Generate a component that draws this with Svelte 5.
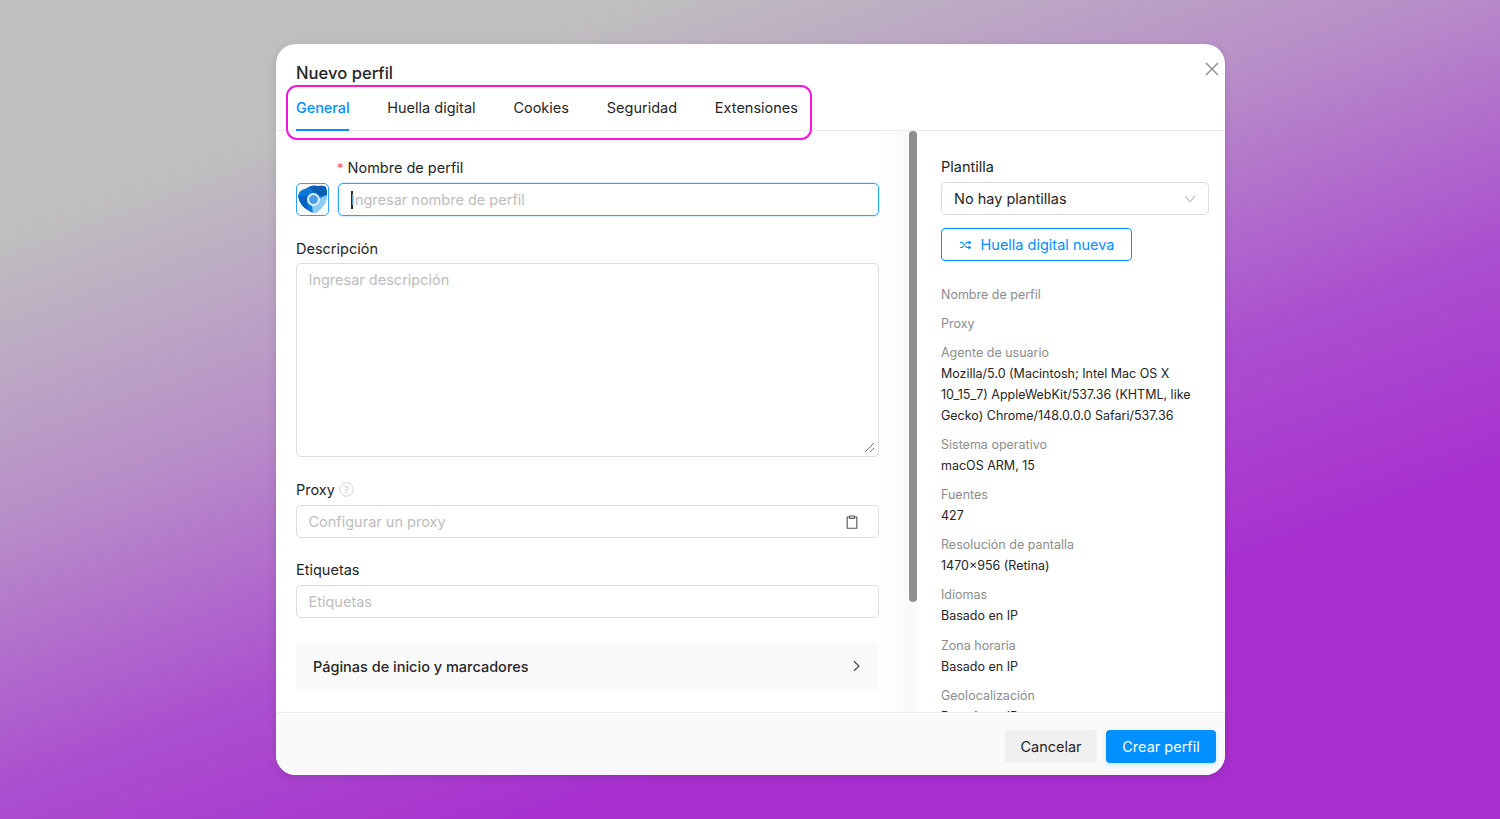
<script>
  const info = [
    { k: 'Nombre de perfil' },
    { k: 'Proxy' },
    { k: 'Agente de usuario', v: 'Mozilla/5.0 (Macintosh; Intel Mac OS X 10_15_7) AppleWebKit/537.36 (KHTML, like Gecko) Chrome/148.0.0.0 Safari/537.36' },
    { k: 'Sistema operativo', v: 'macOS ARM, 15' },
    { k: 'Fuentes', v: '427' },
    { k: 'Resolución de pantalla', v: '1470×956 (Retina)' },
    { k: 'Idiomas', v: 'Basado en IP' },
    { k: 'Zona horaria', v: 'Basado en IP' },
    { k: 'Geolocalización', v: 'Basado en IP' }
  ];
  const tabs = ['General', 'Huella digital', 'Cookies', 'Seguridad', 'Extensiones'];
</script>

<div class="page">
  <div class="modal">
    <header class="head">
      <h1>Nuevo perfil</h1>
      <button class="close" aria-label="Cerrar">
        <svg width="14" height="14" viewBox="0 0 14 14"><path d="M1 1l12 12M13 1L1 13" stroke="#8c8c8c" stroke-width="1.4" fill="none"/></svg>
      </button>
      <nav class="tabs">
        {#each tabs as t, i}
          <span class="tab" class:active={i === 0}>{t}</span>
        {/each}
      </nav>
      <div class="mark"></div>
    </header>

    <div class="body">
      <section class="left">
        <div class="namerow">
          <div class="avatar">
            <svg width="31" height="31" viewBox="0 0 31 31">
              <path d="M1 12 Q2 6 8 5 Q15 0 21 2 Q26 1 29 3 Q31 9 29.5 15 Q27 23 20 28 Q16 30 12 27 Q3 22 1 12Z" fill="#0b78d8"/>
              <path d="M12 3 Q16 1 21 2 Q26 1 29 3 Q30 7 29.8 11 L23 12 L17 8 Z" fill="#0a5db8"/>
              <path d="M21 15 L29.8 11 Q30 14 29 17 Q26 24 20 28 Q18 29 16 29 L15 22 Z" fill="#8ccdf7"/>
              <path d="M1 12 L10 12 L10 20 L11 26 Q3 22 1 12Z" fill="#0760bd"/>
              <circle cx="16.5" cy="15.5" r="5.5" fill="#4f9fe4" stroke="#dff1ff" stroke-width="2"/>
            </svg>
          </div>
          <div class="namecol">
            <label class="lbl namelbl" for="n"><span class="req">*</span>Nombre de perfil</label>
            <div class="input focus" id="n"><span class="caret"></span><span class="ph">Ingresar nombre de perfil</span></div>
          </div>
        </div>

        <div class="lbl desc-lbl">Descripción</div>
        <div class="textarea">
          <span class="ph">Ingresar descripción</span>
          <svg class="grip" width="11" height="11" viewBox="0 0 11 11"><path d="M1 10L10 1M6 10l4-4" stroke="#777" stroke-width="1" fill="none"/></svg>
        </div>

        <div class="lbl proxy-lbl">Proxy
          <svg width="15" height="15" viewBox="0 0 15 15"><circle cx="7.5" cy="7.5" r="6.8" fill="none" stroke="#d4d4d4"/><text x="7.5" y="10.8" text-anchor="middle" font-size="9" fill="#c4c4c4">?</text></svg>
        </div>
        <div class="input">
          <span class="ph">Configurar un proxy</span>
          <svg class="clip" width="12" height="14" viewBox="0 0 12 14"><path d="M3.5 2H1.2v11.3h9.6V2H8.5" fill="none" stroke="#555" stroke-width="1.1"/><rect x="3.5" y="1" width="5" height="2.4" rx=".5" fill="none" stroke="#555" stroke-width="1.1"/></svg>
        </div>

        <div class="lbl tags-lbl">Etiquetas</div>
        <div class="input"><span class="ph">Etiquetas</span></div>

        <div class="collapse">
          <span>Páginas de inicio y marcadores</span>
          <svg width="9" height="12" viewBox="0 0 9 12"><path d="M2 1.2L7 6l-5 4.8" fill="none" stroke="#444" stroke-width="1.2"/></svg>
        </div>
      </section>

      <div class="scroll"><div class="thumb"></div></div>

      <aside class="right">
        <div class="lbl plant">Plantilla</div>
        <div class="select">
          <span>No hay plantillas</span>
          <svg width="12" height="8" viewBox="0 0 12 8"><path d="M1 1.2l5 5.4 5-5.4" fill="none" stroke="#bdbdbd" stroke-width="1.1"/></svg>
        </div>
        <button class="outline">
          <svg width="13" height="10" viewBox="0 0 13 10"><path d="M1 2.5h2.2l4.6 5H11M1 7.5h2.2l1.4-1.6M6.5 3.9l1.3-1.4H11M9.6 1l1.9 1.5-1.9 1.5M9.6 6l1.9 1.5L9.6 9" fill="none" stroke="#0090ff" stroke-width="1.1"/></svg>
          Huella digital nueva
        </button>
        <div class="info">
          {#each info as it}
            <div class="item">
              <div class="k">{it.k}</div>
              {#if it.v}<div class="v">{it.v}</div>{/if}
            </div>
          {/each}
        </div>
      </aside>
    </div>

    <footer class="foot">
      <button class="btn ghost">Cancelar</button>
      <button class="btn primary">Crear perfil</button>
    </footer>
  </div>
</div>

<style>
  :global(body) { margin: 0; }
  .page {
    box-sizing: border-box;
    width: 1500px; height: 819px;
    padding: 44px 275px 44px 276px;
    overflow: hidden;
    background: linear-gradient(160deg, #bfbfbf 0%, #bfbfbf 17%, #b88fc8 38%, #ab4fcf 58%, #a82fcf 75%, #a82ecf 100%);
    font-family: Inter, "Liberation Sans", sans-serif;
    color: #262626;
  }
  .modal {
    height: 731px;
    background: #fff;
    border-radius: 20px;
    display: flex; flex-direction: column;
    overflow: hidden;
    box-shadow: 0 2px 8px rgba(0,0,0,.12);
  }
  .head {
    position: relative;
    height: 87px;
    flex: none;
    box-sizing: border-box;
    padding: 18.5px 20px 0;
    border-bottom: 1px solid #ececec;
  }
  h1 { margin: 0; font-size: 16.6px; line-height: 21px; font-weight: 500; }
  .close { position: absolute; top: 18px; right: 6px; background: none; border: 0; padding: 0; width: 14px; height: 14px; display: flex; }
  .tabs { display: flex; gap: 37.8px; margin-top: 4.5px; }
  .tab { font-size: 14.5px; line-height: 20px; padding: 10px 0 12px; height: 20px; font-weight: 400; position: relative; }
  .tab.active { color: #0090ff; font-weight: 500; letter-spacing: -0.08px; }
  .tab.active::after { content: ''; position: absolute; left: 0; right: 0; bottom: -1px; height: 2px; background: #0090ff; }
  .mark { position: absolute; left: 10px; top: 41px; width: 522px; height: 51px; border: 2px solid #f317e0; border-radius: 11px; }

  .body { flex: 1; min-height: 0; display: flex; overflow: hidden; }
  .left { width: 583px; flex: none; box-sizing: border-box; margin-left: 20px; padding-top: 27px; }
  .scroll { width: 38px; flex: none; background: linear-gradient(90deg, #fff 0, #fafafa 26px, #fafafa 100%); }
  .thumb { width: 8px; height: 471px; background: #8f8f8f; border-radius: 4px; margin-left: 30px; }
  .lbl { font-size: 14.5px; line-height: 20px; color: #262626; }
  .namerow { display: flex; gap: 8px; align-items: flex-end; }
  .namecol { flex: 1; }
  .namelbl { display: block; margin-bottom: 5px; }
  .req { color: #ff4d4f; margin-right: 4px; font-size: 13px; }
  .avatar { width: 33px; height: 33px; box-sizing: border-box; border: 1px solid #2ea1ff; border-radius: 5px; display: flex; align-items: center; justify-content: center; overflow: hidden; }
  .input {
    position: relative;
    box-sizing: border-box;
    height: 33px;
    border: 1px solid #dcdcdc;
    border-radius: 5px;
    padding: 0 11.5px;
    display: flex; align-items: center;
    font-size: 14.5px;
  }
  .input.focus { border-color: #2ea1ff; box-shadow: 0 0 0 1px rgba(0,144,255,.15); margin-left: 1px; padding: 0 12px; }
  .caret { width: 2px; height: 18px; background: #222; margin-right: -2px; flex: none; }
  .ph { color: #bdbdbd; font-size: 14.5px; line-height: 20px; }
  .desc-lbl { margin-top: 23px; margin-bottom: 4px; }
  .textarea { position: relative; box-sizing: border-box; height: 194px; border: 1px solid #dcdcdc; border-radius: 5px; padding: 6px 11.5px; }
  .textarea .ph { position: relative; top: -1px; }
  .grip { position: absolute; right: 3px; bottom: 3px; }
  .proxy-lbl { margin-top: 23px; margin-bottom: 5px; display: flex; align-items: center; gap: 4px; }
  .proxy-lbl svg { position: relative; top: -1px; }
  .clip { position: absolute; right: 20px; top: 9px; }
  .tags-lbl { margin-top: 22px; margin-bottom: 5px; }
  .collapse { margin-top: 24px; height: 48px; box-sizing: border-box; background: #fafafa; border-radius: 6px; padding: 0 18px 0 17px; display: flex; align-items: center; justify-content: space-between; font-size: 14.5px; font-weight: 500; }

  .right { flex: 1; min-width: 0; padding: 26px 16px 0 24px; overflow: hidden; background: #fff; }
  .plant { margin-bottom: 5px; }
  .select { box-sizing: border-box; height: 33px; border: 1px solid #dcdcdc; border-radius: 5px; padding: 0 12px; display: flex; align-items: center; justify-content: space-between; font-size: 14.5px; }
  .outline { margin-top: 13px; height: 33px; width: 191px; box-sizing: border-box; background: #fff; border: 1px solid #0090ff; border-radius: 4px; color: #0090ff; font: 400 14.5px Inter, sans-serif; display: flex; align-items: center; justify-content: center; gap: 9px; padding: 0; }
  .info { margin-top: 23px; display: flex; flex-direction: column; gap: 8.08px; }
  .k { font-size: 12.5px; line-height: 21px; color: #8c8c8c; }
  .v { font-size: 12.5px; line-height: 21px; color: #262626; }

  .foot { flex: none; height: 63px; box-sizing: border-box; background: #fafafa; border-top: 1px solid #ececec; display: flex; justify-content: flex-end; align-items: flex-start; gap: 9px; padding: 17px 9px 0 0; }
  .btn { height: 33px; border: 0; border-radius: 4px; font: 400 14.5px Inter, sans-serif; padding: 0; }
  .ghost { width: 92px; background: #f0f0f0; color: #262626; }
  .primary { width: 110px; background: #0090ff; color: #fff; box-shadow: 0 2px 4px rgba(0,144,255,.2); }
</style>
